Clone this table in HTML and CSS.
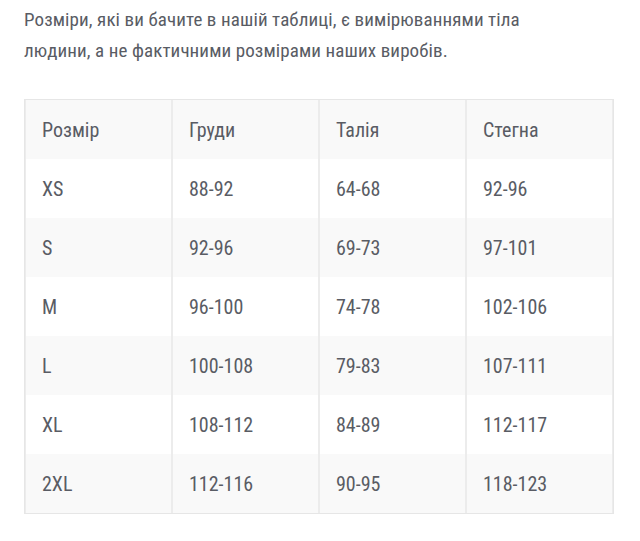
FILE: index.html
```html
<!DOCTYPE html>
<html lang="uk">
<head>
<meta charset="utf-8">
<link rel="stylesheet" href="styles.css">
</head>
<body>
<div class="page">
  <p class="intro">Розміри, які ви бачите в нашій таблиці, є вимірюваннями тіла людини, а не фактичними розмірами наших виробів.</p>
  <table class="sizes">
    <tr><td>Розмір</td><td>Груди</td><td>Талія</td><td>Стегна</td></tr>
    <tr><td>XS</td><td>88-92</td><td>64-68</td><td>92-96</td></tr>
    <tr><td>S</td><td>92-96</td><td>69-73</td><td>97-101</td></tr>
    <tr><td>M</td><td>96-100</td><td>74-78</td><td>102-106</td></tr>
    <tr><td>L</td><td>100-108</td><td>79-83</td><td>107-111</td></tr>
    <tr><td>XL</td><td>108-112</td><td>84-89</td><td>112-117</td></tr>
    <tr><td>2XL</td><td>112-116</td><td>90-95</td><td>118-123</td></tr>
  </table>
</div>
</body>
</html>
```

FILE: styles.css
```css
html, body {
  margin: 0;
  padding: 0;
  background: #fff;
}
.page {
  padding: 0 27px 0 24px;
  font-family: Roboto, "Noto Sans", sans-serif;
  font-stretch: 75%;
  color: #595c64;
  font-size: 20px;
}
.intro {
  margin: 0;
  padding-top: 4px;
  font-size: 19px;
  letter-spacing: 0.1px;
  line-height: 31px;
  width: 500px;
}
.sizes {
  margin-top: 33px;
  width: 590px;
  border-collapse: separate;
  border-spacing: 0;
  border: 1px solid #e6e6e6;
}
.sizes td {
  width: 25%;
  height: 59px;
  padding: 0 0 0 16px;
  box-sizing: border-box;
  border-left: 1px solid #ececec;
  border-right: 1px solid #ececec;
  vertical-align: middle;
  line-height: 20px;
}
.sizes tr:nth-child(odd) td {
  background: #f9f9f9;
}
```
